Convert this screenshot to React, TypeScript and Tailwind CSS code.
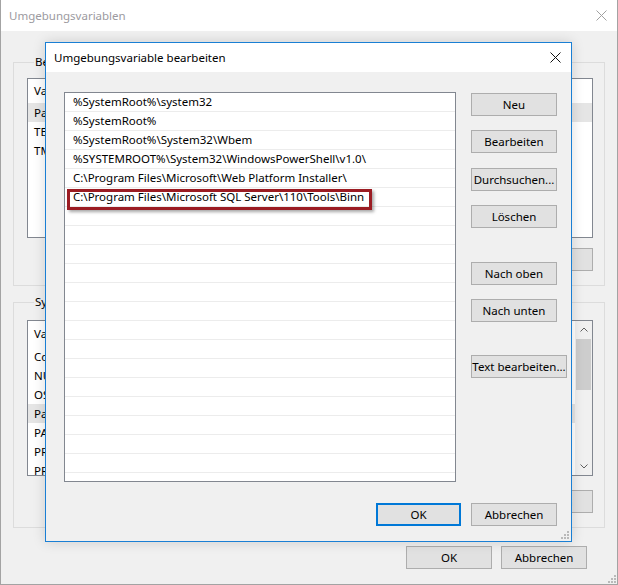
import React from "react";

const font = { fontFamily: '"Noto Sans", "Segoe UI", Arial, sans-serif' };

// Windows 10 style push button
function Btn({ label, w = "w-[86px]", focused = false }: { label: string; w?: string; focused?: boolean }) {
  return (
    <div
      className={`${w} h-[23px] shrink-0 flex items-center justify-center whitespace-nowrap bg-[#e1e1e1] text-[11.5px] text-black ${
        focused ? "border-2 border-[#0078d7]" : "border border-[#adadad]"
      }`}
    >
      {label}
    </div>
  );
}

function CloseX({ color }: { color: string }) {
  return (
    <svg width="11" height="11" viewBox="0 0 11 11">
      <path d="M0.5 0.5L10.5 10.5M10.5 0.5L0.5 10.5" stroke={color} strokeWidth="1" />
    </svg>
  );
}

function Grip() {
  return (
    <svg width="9" height="9" viewBox="0 0 9 9">
      {[
        [7, 1],
        [4, 4],
        [7, 4],
        [1, 7],
        [4, 7],
        [7, 7],
      ].map(([x, y], i) => (
        <rect key={i} x={x} y={y} width="2" height="2" fill="#b9b9b9" />
      ))}
    </svg>
  );
}

// Listview mit Spaltenkopf (hinteres Fenster)
function VarList({ rows, height, header, scroll = false }: { rows: string[]; height: string; header: string; scroll?: boolean }) {
  return (
    <div className={`${height} bg-white border border-[#828790] flex overflow-hidden`}>
      <div className="flex-1 flex flex-col">
        <div className={`${header} shrink-0 flex items-center pl-[6px] text-[11.5px] text-black`}>
          <span>Variable</span>
        </div>
        {rows.map((name, i) => (
          <div
            key={i}
            className={`h-[19px] shrink-0 flex items-center pl-[6px] text-[11.5px] text-black ${
              name === "Path" ? "bg-[#e5e5e5]" : ""
            }`}
          >
            <span className="whitespace-nowrap">{name}</span>
          </div>
        ))}
      </div>
      {scroll && (
        <div className="w-[17px] bg-[#f0f0f0] flex flex-col items-center">
          <div className="h-[17px] flex items-center justify-center">
            <svg width="8" height="5" viewBox="0 0 8 5">
              <path d="M0.5 4.5L4 1L7.5 4.5" stroke="#606060" fill="none" />
            </svg>
          </div>
          <div className="w-[15px] h-[51px] bg-[#cdcdcd] mt-[1px]" />
          <div className="flex-1" />
          <div className="h-[17px] flex items-center justify-center">
            <svg width="8" height="5" viewBox="0 0 8 5">
              <path d="M0.5 0.5L4 4L7.5 0.5" stroke="#606060" fill="none" />
            </svg>
          </div>
        </div>
      )}
    </div>
  );
}

const pathEntries = [
  "%SystemRoot%\\system32",
  "%SystemRoot%",
  "%SystemRoot%\\System32\\Wbem",
  "%SYSTEMROOT%\\System32\\WindowsPowerShell\\v1.0\\",
  "C:\\Program Files\\Microsoft\\Web Platform Installer\\",
  "C:\\Program Files\\Microsoft SQL Server\\110\\Tools\\Binn",
];

function EditDialog() {
  const empty = Array.from({ length: 14 });
  return (
    <div className="absolute left-[44px] top-[42px] w-[527px] h-[500px] border border-[#1a7fd4] bg-[#f0f0f0] flex flex-col shadow-[0_0_12px_rgba(0,0,0,0.15)]">
      {/* Titelleiste */}
      <div className="h-[29px] bg-white flex items-center justify-between pl-[8px] pr-[10px]">
        <span className="text-[11.5px] text-black">Umgebungsvariable bearbeiten</span>
        <CloseX color="#111111" />
      </div>

      {/* Liste + Buttons */}
      <div className="flex pt-[20px] pl-[18px]">
        <div className="w-[392px] h-[390px] bg-white border border-[#828790] flex flex-col overflow-hidden">
          {pathEntries.map((p, i) => (
            <div
              key={i}
              className="relative h-[19px] shrink-0 border-b border-[#ececec] flex items-center pl-[8px] text-[11.5px] text-black"
            >
              <span className="whitespace-nowrap">{p}</span>
              {i === 5 && (
                <div className="absolute left-[2px] top-[1px] w-[305px] h-[21px] border-[3px] border-[#9b1c23] shadow-[2px_2px_3px_rgba(0,0,0,0.35)]" />
              )}
            </div>
          ))}
          {empty.map((_, i) => (
            <div key={i} className="h-[19px] shrink-0 border-b border-[#ececec]" />
          ))}
        </div>

        <div className="ml-[15px] flex flex-col pt-[1px]">
          <Btn label="Neu" />
          <div className="mt-[14px]">
            <Btn label="Bearbeiten" />
          </div>
          <div className="mt-[15px]">
            <Btn label="Durchsuchen..." />
          </div>
          <div className="mt-[14px]">
            <Btn label="Löschen" />
          </div>
          <div className="mt-[34px]">
            <Btn label="Nach oben" />
          </div>
          <div className="mt-[14px]">
            <Btn label="Nach unten" />
          </div>
          <div className="mt-[33px]">
            <Btn label="Text bearbeiten..." w="w-[96px]" />
          </div>
        </div>
      </div>

      {/* Fußleiste */}
      <div className="flex justify-end gap-[10px] pr-[14px] mt-[21px]">
        <Btn label="OK" w="w-[85px]" focused />
        <Btn label="Abbrechen" />
      </div>
      <div className="flex-1 flex items-end justify-end pr-[2px] pb-[2px]">
        <Grip />
      </div>
    </div>
  );
}

export default function App() {
  const userRows = ["Path", "TEMP", "TMP"];
  const sysRows = ["ComSpec", "NUMBER_OF_PROCESSORS", "OS", "Path", "PATHEXT", "PROCESSOR_ARCHITECTURE", "PROCESSOR_IDENTIFIER"];

  return (
    <div style={font} className="relative w-[618px] h-[585px] bg-[#f0f0f0] border-l border-r border-b border-[#a3a3a3] flex flex-col overflow-hidden">
      {/* Titelleiste hinteres Fenster */}
      <div className="h-[31px] shrink-0 bg-white flex items-center justify-between pl-[8px] pr-[10px]">
        <span className="text-[11.5px] text-[#9c9aa0]">Umgebungsvariablen</span>
        <CloseX color="#a0a0a0" />
      </div>

      <div className="flex-1 flex flex-col px-[12px] pt-[23px]">
        <fieldset className="border border-[#dcdcdc] pl-[13px] pr-[11px] pb-[14px]">
          <legend className="ml-[7px] px-[1px] text-[11.5px] leading-[16px] text-black">Benutzervariablen</legend>
          <div className="pt-[8px]">
            <VarList rows={userRows} height="h-[160px]" header="h-[24px]" />
          </div>
          <div className="mt-[10px] flex justify-end gap-[10px]">
            <Btn label="Neu..." />
            <Btn label="Bearbeiten..." />
            <Btn label="Löschen" />
          </div>
        </fieldset>

        <fieldset className="mt-[8px] border border-[#dcdcdc] pl-[13px] pr-[11px] pb-[14px]">
          <legend className="ml-[7px] px-[1px] text-[11.5px] leading-[16px] text-black">Systemvariablen</legend>
          <div className="pt-[10px]">
            <VarList rows={sysRows} height="h-[156px]" header="h-[26px]" scroll />
          </div>
          <div className="mt-[14px] flex justify-end gap-[10px]">
            <Btn label="Neu..." />
            <Btn label="Bearbeiten..." />
            <Btn label="Löschen" />
          </div>
        </fieldset>

        <div className="mt-[18px] flex justify-end gap-[9px] pr-[18px]">
          <Btn label="OK" />
          <Btn label="Abbrechen" />
        </div>
      </div>

      <div className="absolute right-[1px] bottom-[1px]">
        <Grip />
      </div>

      <EditDialog />
    </div>
  );
}
